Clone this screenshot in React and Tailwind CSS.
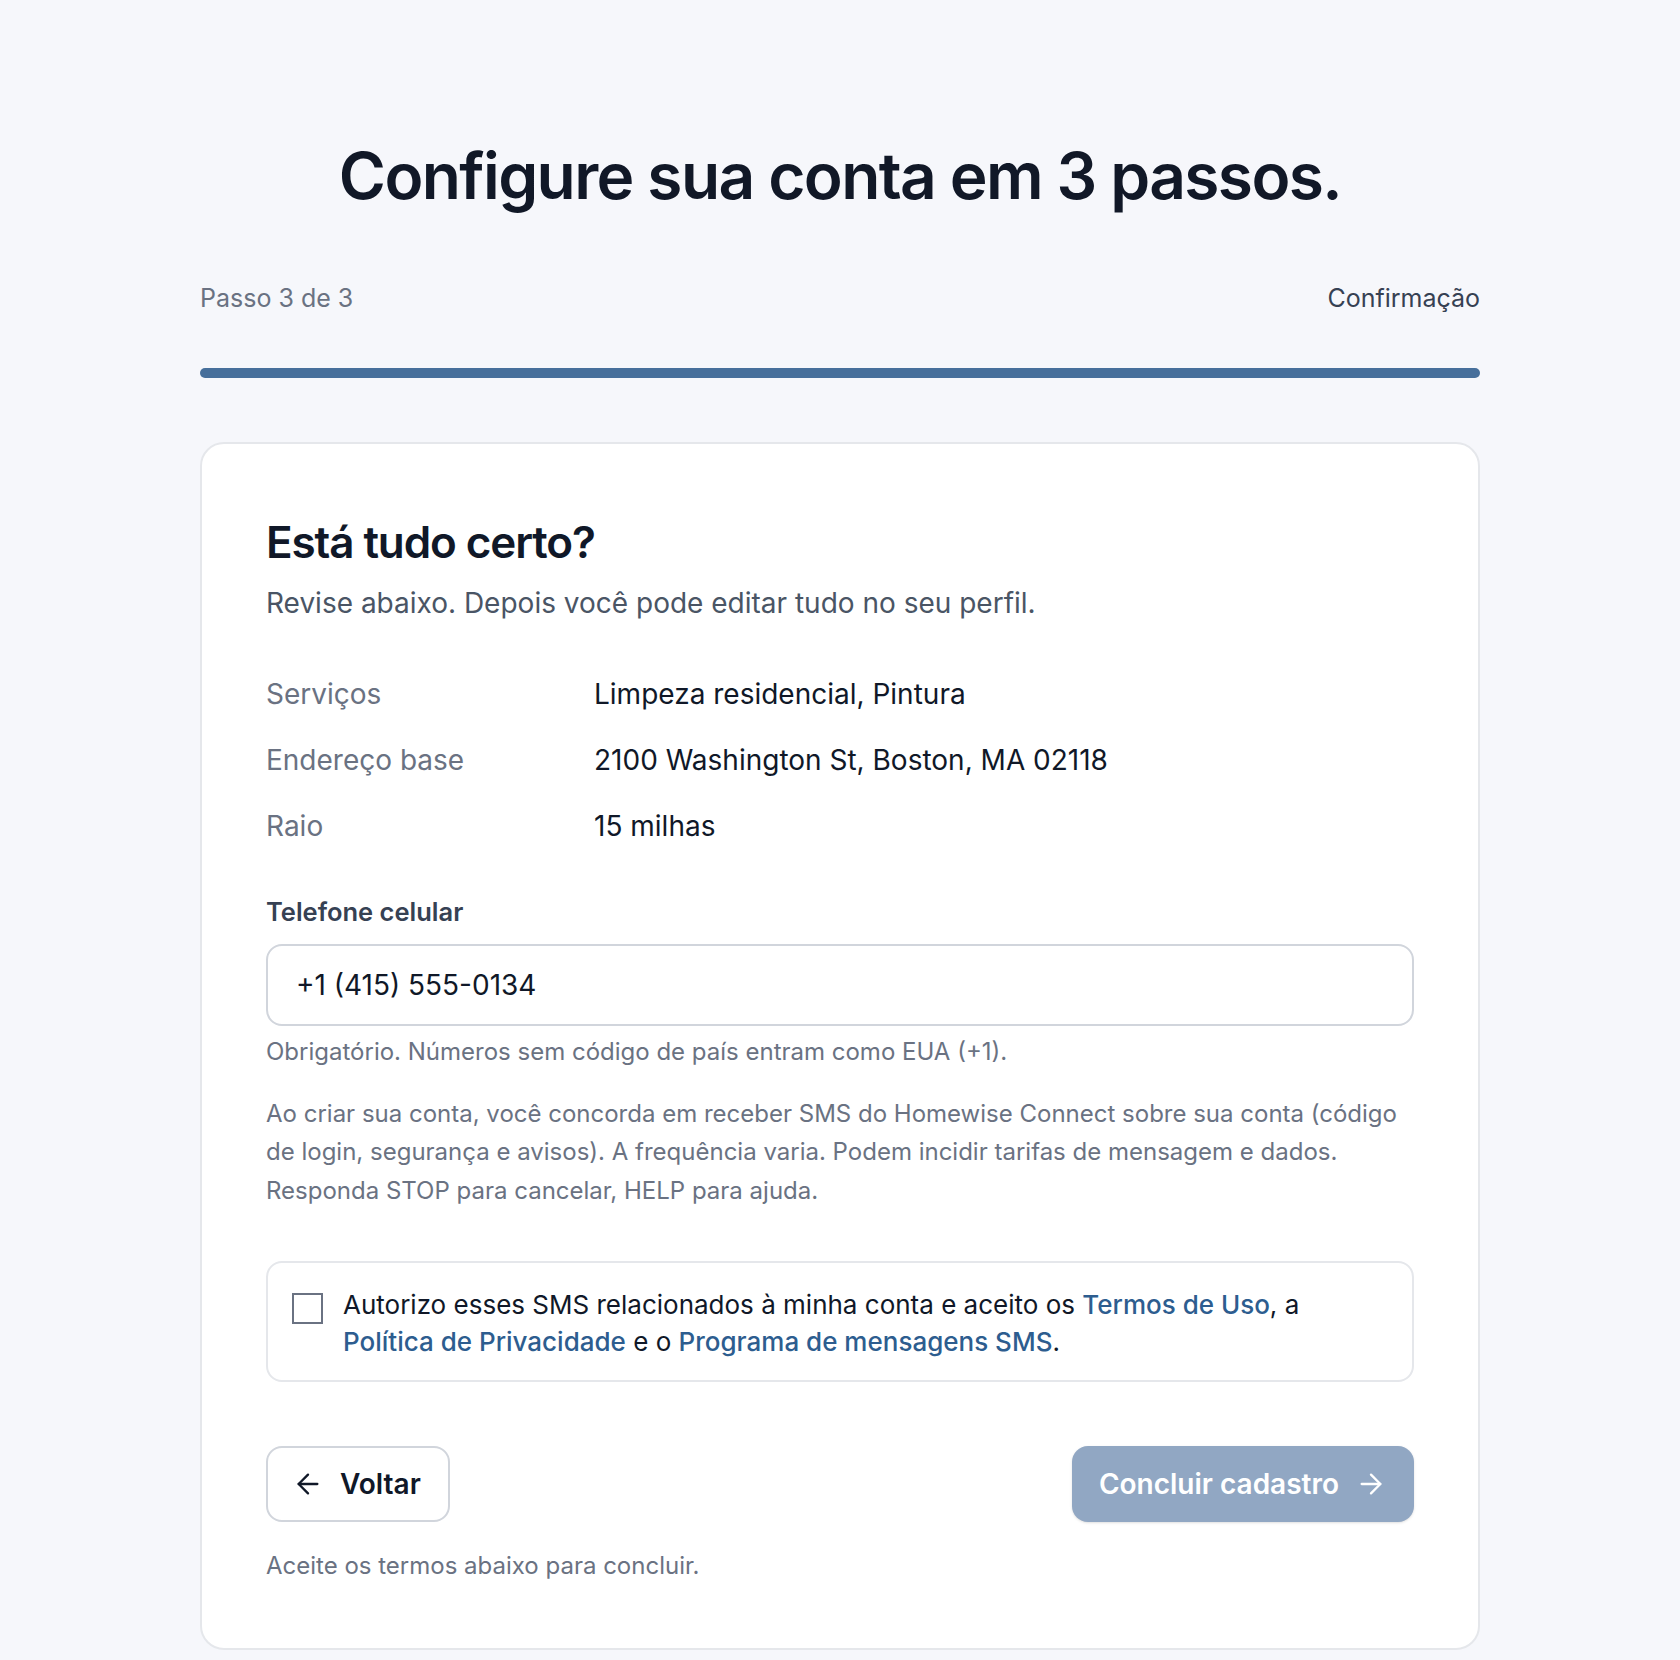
import React, { useState } from 'react';
import { ArrowLeft, ArrowRight } from 'lucide-react';

const summary = [
  { label: 'Serviços', value: 'Limpeza residencial, Pintura' },
  { label: 'Endereço base', value: '2100 Washington St, Boston, MA 02118' },
  { label: 'Raio', value: '15 milhas' },
];

const App = () => {
  const [accepted, setAccepted] = useState(false);

  return (
    <div className="min-h-screen bg-[#f6f7fb] font-['Inter',sans-serif] text-gray-900">
      <div className="max-w-7xl mx-auto pt-[144px] pb-3">
        <h1 className="text-center text-[64px] leading-none font-semibold tracking-tight text-[#111827]">
          Configure sua conta em 3 passos.
        </h1>

        {/* step indicator */}
        <div className="mt-[74px] flex items-center justify-between text-[25px] leading-8">
          <span className="text-gray-500">Passo 3 de 3</span>
          <span className="text-gray-700">Confirmação</span>
        </div>
        <div className="mt-[54px] h-2.5 rounded-full bg-[#476f9b]" />

        <div className="mt-[64px] rounded-3xl border-2 border-[#e5e7eb] bg-white px-16 pt-[71px] pb-[66px]">
          <h2 className="text-[44px] leading-tight font-semibold tracking-tight">Está tudo certo?</h2>
          <p className="mt-3 text-[28px] leading-[42px] text-gray-600">
            Revise abaixo. Depois você pode editar tudo no seu perfil.
          </p>

          <dl className="mt-[50px] flex flex-col gap-[26px] text-[28px]">
            {summary.map((row) => (
              <div key={row.label} className="flex leading-10">
                <dt className="w-[328px] shrink-0 text-gray-500">{row.label}</dt>
                <dd className="text-gray-900">{row.value}</dd>
              </div>
            ))}
          </dl>

          <label className="mt-[50px] block text-[25.5px] leading-8 font-semibold text-gray-700">Telefone celular</label>
          <input
            type="tel"
            defaultValue="+1 (415) 555-0134"
            className="mt-4 block h-[82px] w-full rounded-2xl border-2 border-gray-300 px-7 text-[28px] text-gray-900 outline-none"
          />
          <p className="mt-2.5 text-2xl text-gray-500">Obrigatório. Números sem código de país entram como EUA (+1).</p>

          <p className="mt-[27px] text-2xl leading-[1.6] text-gray-500">
            Ao criar sua conta, você concorda em receber SMS do Homewise Connect sobre sua conta (código de login,
            segurança e avisos). A frequência varia. Podem incidir tarifas de mensagem e dados. Responda STOP para
            cancelar, HELP para ajuda.
          </p>

          {/* consent box */}
          <div className="mt-[51px] flex items-start gap-5 rounded-2xl border-2 border-[#e5e7eb] px-6 pt-[22px] pb-[20px]">
            <button
              type="button"
              onClick={() => setAccepted(!accepted)}
              className={`mt-[8px] h-[31px] w-[31px] shrink-0 border-2 ${accepted ? 'border-[#476f9b] bg-[#476f9b]' : 'border-gray-500 bg-white'}`}
            />
            <p className="mt-[2px] text-[26px] leading-[1.4] text-gray-900">
              Autorizo esses SMS relacionados à minha conta e aceito os{' '}
              <a href="#" className="font-medium text-[#2d5d8f]">Termos de Uso</a>, a{' '}
              <a href="#" className="font-medium text-[#2d5d8f]">Política de Privacidade</a> e o{' '}
              <a href="#" className="font-medium text-[#2d5d8f]">Programa de mensagens SMS</a>.
            </p>
          </div>

          <div className="mt-[64px] flex items-center justify-between">
            <button
              type="button"
              className="flex h-[76px] items-center gap-4 rounded-2xl border-2 border-gray-300 bg-white pl-[24px] pr-[27px] text-[28px] font-semibold text-gray-900"
            >
              <ArrowLeft className="h-8 w-8" strokeWidth={1.75} />
              Voltar
            </button>
            <button
              type="button"
              disabled={!accepted}
              className={`flex h-[76px] items-center gap-4 rounded-2xl pl-[27px] pr-[27px] text-[28px] font-semibold text-white shadow-sm ${accepted ? 'bg-[#476f9b]' : 'bg-[#91a7c3]'}`}
            >
              Concluir cadastro
              <ArrowRight className="h-8 w-8" strokeWidth={1.75} />
            </button>
          </div>

          <p className="mt-7 text-2xl text-gray-500">Aceite os termos abaixo para concluir.</p>
        </div>
      </div>
    </div>
  );
};

export default App;
